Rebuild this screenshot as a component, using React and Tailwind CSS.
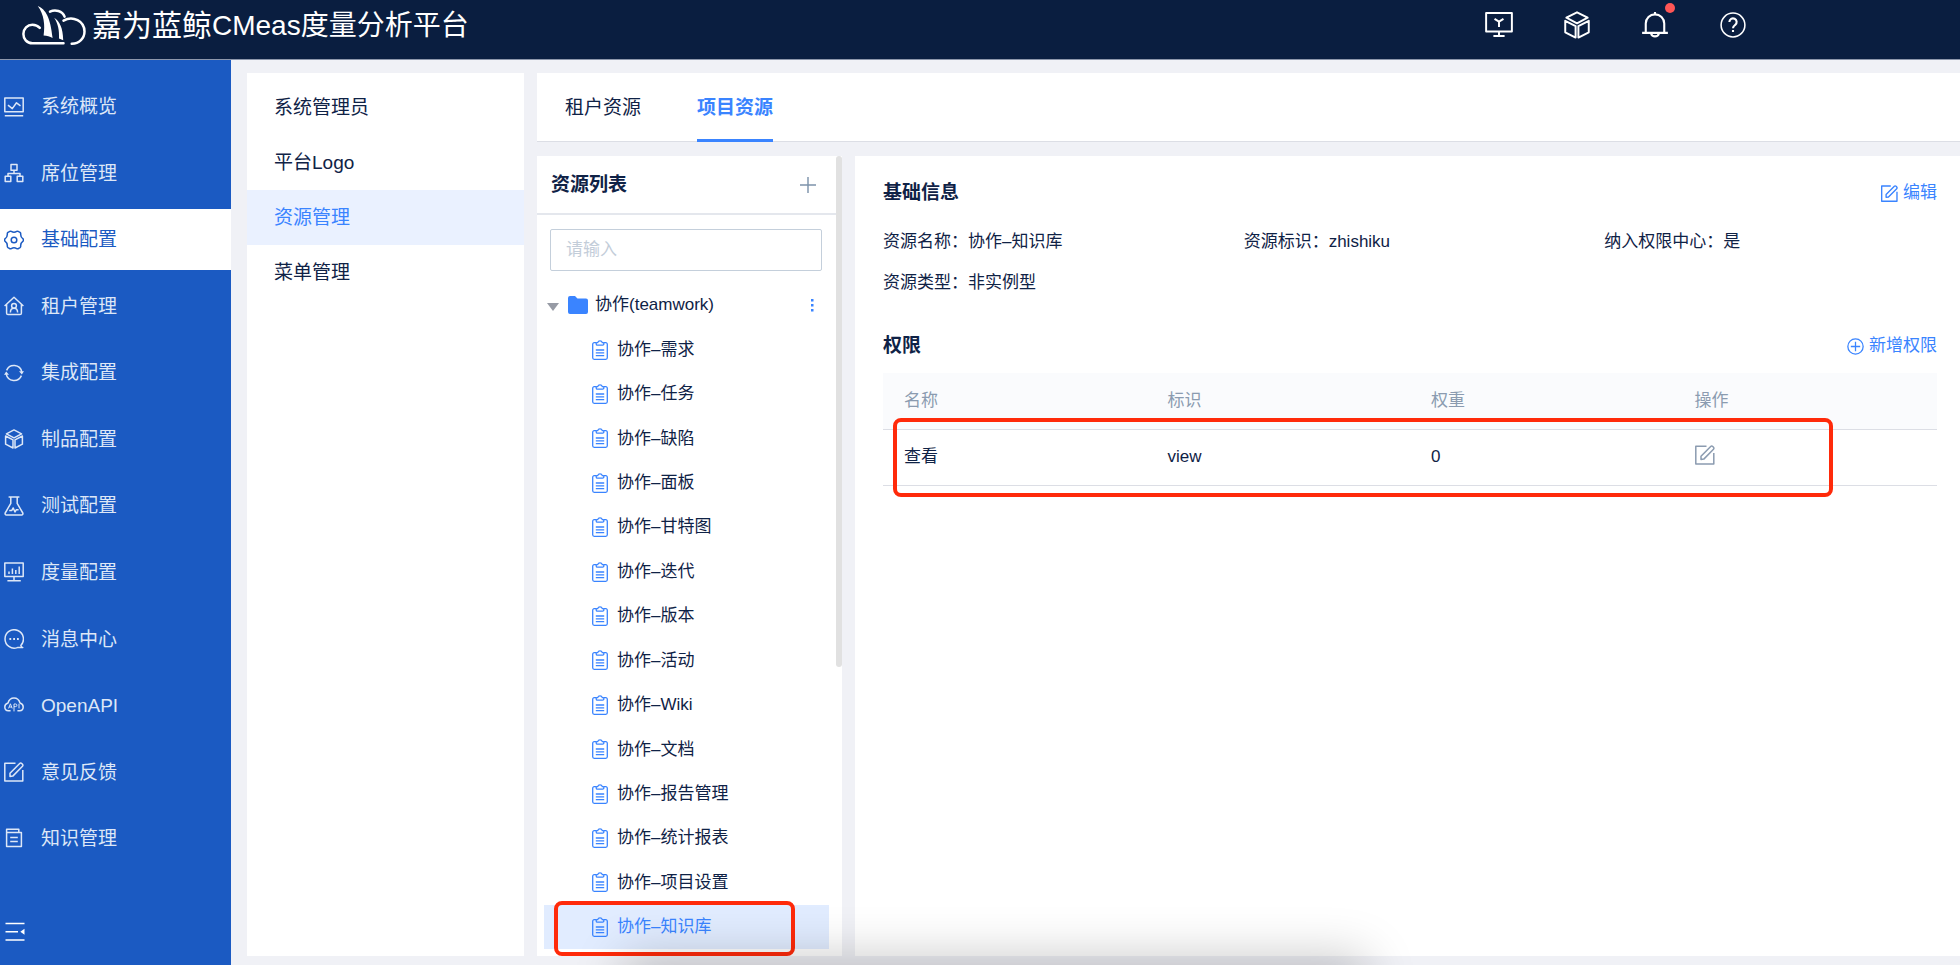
import React, { useState } from "react";

const Svg = ({ size = 20, children, className = "", width = 1.5 }) => (
  <svg
    width={size}
    height={size}
    viewBox="0 0 20 20"
    fill="none"
    stroke="currentColor"
    strokeWidth={width}
    strokeLinejoin="round"
    className={`shrink-0 ${className}`}
    aria-hidden="true"
  >
    {children}
  </svg>
);

const CubeShape = () => (
  <>
    <path d="M10 .9 17.6 4.800 10 8.800 2.400 4.800z" />
    <path d="M1.600 7 9 10.800v8.200L1.600 15.200zM18.400 7 11 10.800v8.200l7.400-3.800z" />
  </>
);

const EditShape = () => (
  <>
    <path d="M11.500 1.200H.8v17.900h18V8" />
    <path d="M6 14.400v-3.200L15.700 1.500a1.400 1.400 0 0 1 2 0l.8.8a1.400 1.400 0 0 1 0 2L8.800 14.100z" />
  </>
);

const Logo = () => (
  <svg
    width="64"
    height="40"
    viewBox="0 0 64 40"
    fill="none"
    stroke="#fff"
    strokeWidth="2.5"
    strokeLinecap="round"
    className="shrink-0"
    aria-hidden="true"
  >
    <path d="M41.500 37.300H10.500C4.500 37.300 1.400 32.600 1.400 28c0-5.400 4-9.300 9-9.300 3 0 5.600 1.200 7.400 3.200" />
    <path d="M28 5.600c5-2.400 12.500-1 14.600 5" />
    <path d="M41.500 14.600c9.500-5.400 21 .6 21 11 0 6.800-5.200 12-12.800 12.200" />
    <path
      d="M15.800 0C24 3.400 28.500 12 30.600 32c-2.800-1.500-5.500-2.300-9-2.600C23.200 19 22 8.500 15.800 0zM32.200 11.800c5.500 3.800 8.700 10 9 22.400l-4.200-1.600c.4-8-.8-14.600-4.800-20.800z"
      fill="#fff"
      stroke="none"
    />
  </svg>
);

const menus = [
  {
    label: "系统概览",
    icon: (
      <>
        <path d="M.8 1h18.400v13.800H.8zM.8 18.800h18.400" />
        <path d="m4 8.200 4.300 3.400 4.200-5.800 4 3" />
      </>
    ),
  },
  {
    label: "席位管理",
    icon: (
      <path d="M7 1.600h6v5.600H7zM1.200 13.200h5.600v5.400H1.200zM13.200 13.200h5.600v5.400h-5.600zM10 7.200v3.200M4 13.200v-2.800h12v2.800" />
    ),
  },
  {
    label: "基础配置",
    icon: (
      <>
        <path d="M5.300 1.600Q6.300.8 7.300 1.400 10 3 12.700 1.400q1-.6 2 .2l1.300.8q.8.600.7 1.600-.2 3 2.100 4.600.8.800.8 1.400t-.8 1.400q-2.300 1.600-2.100 4.600.1 1-.7 1.600l-1.300.8q-1 .8-2 .2-2.700-1.600-5.400 0-1 .6-2-.2L4 17.600q-.8-.6-.7-1.600.2-3-2.100-4.600-.8-.8-.8-1.400t.8-1.400Q3.500 7 3.300 4 3.200 3 4 2.400z" />
        <circle cx="10" cy="10" r="2.800" />
      </>
    ),
  },
  {
    label: "租户管理",
    icon: (
      <>
        <path d="M.6 10 10 1.200l9.400 8.800M2.600 8.600v8.600c0 .9.500 1.400 1.400 1.400h12c.9 0 1.400-.5 1.400-1.400V8.600" />
        <circle cx="10" cy="9.800" r="2.400" />
        <path d="M6.400 16.400c0-2.400 1.400-4.200 3.600-4.200s3.600 1.800 3.600 4.200" />
      </>
    ),
  },
  {
    label: "集成配置",
    icon: (
      <>
        <path d="M2.600 7.400a8 8 0 0 1 15.200 1.400M17.400 12.600A8 8 0 0 1 2.200 11.200" />
        <path d="M15 8.200h5L17.800 11.400zM0 11.800h5L2.200 8.600z" fill="currentColor" stroke="none" />
      </>
    ),
  },
  { label: "制品配置", icon: <CubeShape /> },
  {
    label: "测试配置",
    icon: (
      <>
        <path d="M4.600 1h10.800M6.800 1v6.400L1.200 17c-.4 1 .2 1.900 1.200 1.900h15.200c1 0 1.600-.9 1.200-1.900l-5.600-9.600V1" />
        <path d="M5.200 14.400h2.600l1.400-2.400 1.800 4 1.200-2.200h2.400" />
      </>
    ),
  },
  {
    label: "度量配置",
    icon: (
      <path d="M.8 1h18.400v13.400H.8zM10 14.400v4.200M3.400 18.800h13.400M5 12V9.400M8.400 12V6.400M11.800 12V8M15.200 12V4.400" />
    ),
  },
  {
    label: "消息中心",
    icon: (
      <>
        <path d="M16.800 16.400a9.200 9.200 0 1 0-3.400 2.200h5.400c-1.200-.4-1.800-1.200-2-2.200z" />
        <path d="M5.400 10h1.800M9.200 10H11M13 10h1.800" strokeWidth="1.8" />
      </>
    ),
  },
  {
    label: "OpenAPI",
    icon: (
      <>
        <path d="M6.600 15.800H4.400C2 15.600.8 13.900.8 12c0-2 1.200-3.500 3.200-4C5 4.600 7.200 3 10 3s5 1.600 6 5c2 .5 3.200 2 3.200 4 0 1.900-1.200 3.600-3.600 3.800h-2.200" />
        <path
          d="m4.600 13.400 1.800-4.600 1.800 4.600M5.200 12h2.400M10 16.400V9h1.600a1.200 1.200 0 0 1 0 2.600H10M15 8.800v4.600"
          strokeWidth="1"
        />
      </>
    ),
  },
  { label: "意见反馈", icon: <EditShape /> },
  {
    label: "知识管理",
    icon: (
      <path d="M2.600 4.600h14.800v14H2.600zM2.600 4.600V1.200h12.200v3.400M6.200 9.400h7.600M6.200 13.400h7.600" />
    ),
  },
];

const settings = ["系统管理员", "平台Logo", "资源管理", "菜单管理"];

const tabs = ["租户资源", "项目资源"];

const resources = [
  "需求",
  "任务",
  "缺陷",
  "面板",
  "甘特图",
  "迭代",
  "版本",
  "活动",
  "Wiki",
  "文档",
  "报告管理",
  "统计报表",
  "项目设置",
  "知识库",
];

const details = [
  ["资源名称", "协作–知识库"],
  ["资源标识", "zhishiku"],
  ["纳入权限中心", "是"],
  ["资源类型", "非实例型"],
];

const Header = () => (
  <header className="flex h-[60px] shrink-0 items-start border-b border-[#8d97ab] bg-[#0a1e40] pl-[22px] text-white">
    <div className="flex flex-1 items-center pt-1">
      <Logo />
      <h1 className="ml-1.5 flex items-center whitespace-nowrap text-[28px] leading-11">
        <span className="text-[30px]">嘉为蓝鲸</span>
        <span>CMeas度量分析平台</span>
      </h1>
    </div>
    <div className="mr-[213px] flex h-[50px] items-center gap-[50px]">
      <button aria-label="工作台">
        <Svg size={28} width={1.4}>
          <path d="M.8 1.400h18.400v13.200H.8zM10 14.600v3M6 17.800h8M6.800 5.600 10 7.600l3.200-2M10 7.600v3.800" />
        </Svg>
      </button>
      <button aria-label="产品">
        <Svg size={28} width={1.4}>
          <CubeShape />
        </Svg>
      </button>
      <button aria-label="通知" className="relative">
        <Svg size={28} width={1.5}>
          <path d="M.8 15.600h18.400M3.400 15.600V9a6.600 6.600 0 0 1 13.200 0v6.600M10 2.400V.8M7.200 16a2.900 2.900 0 0 0 5.600 0" />
        </Svg>
        <span className="absolute -right-1.5 -top-2 size-2.5 rounded-full bg-[#ff5656]" />
      </button>
      <button aria-label="帮助">
        <Svg size={28} width={1.1}>
          <circle cx="10" cy="10" r="8.500" />
          <path
            d="M7.400 7.800a2.600 2.600 0 1 1 4.200 2.100c-1 .8-1.600 1.200-1.600 2.500M10 13.600v1.400"
            strokeWidth="1.5"
          />
        </Svg>
      </button>
    </div>
  </header>
);

const Sidebar = () => (
  <aside className="flex w-[231px] shrink-0 flex-col bg-[#1b5ac2] pt-4 text-[#dde7f7]">
    <nav className="flex flex-1 flex-col justify-between">
      {menus.map(({ label, icon }) => (
        <a
          key={label}
          href="#"
          className={`flex h-[61px] items-center gap-[17px] pl-1 text-[19px] ${
            label === "基础配置" ? "bg-white text-[#1b5ac2]" : ""
          }`}
        >
          <Svg>{icon}</Svg>
          <span className="pt-0.5">{label}</span>
        </a>
      ))}
    </nav>
    <div className="flex h-24 items-center px-[5px]">
      <button aria-label="收起菜单" className="mt-[30px] text-white">
        <Svg>
          <path d="M.5 1.500h19M.5 9.800h12.500M.5 18h19" />
          <path d="M19.500 6.800v6l-4.200-3z" fill="currentColor" stroke="none" />
        </Svg>
      </button>
    </div>
  </aside>
);

const ResourceList = () => {
  const [keyword, setKeyword] = useState("");

  return (
    <section className="relative flex w-[305px] shrink-0 flex-col bg-white pb-[7px]">
      <div className="mr-1.5 flex h-[59px] items-center justify-between border-b-2 border-[#e4e7ed] pl-3.5 pr-5">
        <h2 className="pt-0.5 text-[19px] font-bold">资源列表</h2>
        <button aria-label="新增资源" className="text-[#7d93ab]">
          <Svg size={16} width={1.8}>
            <path d="M10 0v20M0 10h20" />
          </Svg>
        </button>
      </div>
      <div className="pb-3 pl-[13px] pr-5 pt-3.5">
        <input
          type="text"
          aria-label="搜索资源"
          placeholder="请输入"
          value={keyword}
          onChange={(e) => setKeyword(e.target.value)}
          className="h-[42px] w-full rounded-xs border border-[#c4cfdb] px-[15px] text-[17px] placeholder:text-[#c3cdd9]"
        />
      </div>
      <div className="ml-[7px] mr-[13px] flex flex-1 flex-col text-[17px]">
        <div className="flex flex-1 items-center pl-[3px] pr-3">
          <svg width="12" height="8" viewBox="0 0 12 8" className="mt-1" fill="#979ba5" aria-hidden="true">
            <path d="M0 0h12L6 8z" />
          </svg>
          <svg width="20" height="18" viewBox="0 0 20 18" className="ml-[9px]" fill="#3a84ff" aria-hidden="true">
            <path d="M2 0h5l2.500 2.500H18a2 2 0 0 1 2 2V16a2 2 0 0 1-2 2H2a2 2 0 0 1-2-2V2a2 2 0 0 1 2-2z" />
          </svg>
          <span className="ml-[7px] flex-1">协作(teamwork)</span>
          <button aria-label="更多操作">
            <svg width="10" height="14" viewBox="0 0 10 14" fill="#3a84ff" aria-hidden="true">
              <path d="M4 1h2.500v2.500H4zM4 6h2.500v2.500H4zM4 11h2.500v2.500H4z" />
            </svg>
          </button>
        </div>
        {resources.map((name) => (
          <a
            key={name}
            href="#"
            className={`relative flex flex-1 items-center gap-[9px] pl-12 ${
              name === "知识库" ? "bg-[#e1ecff] text-[#3a84ff]" : ""
            }`}
          >
            <svg
              width="16"
              height="20"
              viewBox="0 0 16 20"
              fill="none"
              stroke="#3a84ff"
              strokeWidth="1.3"
              aria-hidden="true"
            >
              <path d="M4 2.700H2.200A1.500 1.500 0 0 0 .7 4.200v13.600c0 .8.700 1.500 1.500 1.500h11.600c.8 0 1.500-.7 1.500-1.500V4.200c0-.8-.7-1.500-1.500-1.500H12" />
              <path d="M4.200 3.200q0-.6.700-.6h.8a2.400 2.400 0 0 1 4.600 0h.8q.7 0 .7.600v.8q0 1.200-1.200 1.200H5.400Q4.200 5.200 4.200 4zM3.800 10h8.400M3.800 12.800h8.400M3.800 15.600h8.400" />
            </svg>
            <span>协作–{name}</span>
            {name === "知识库" && (
              <span className="absolute -bottom-[7px] -top-1 left-2.5 right-[34px] rounded-lg border-4 border-[#ff2a0a]" />
            )}
          </a>
        ))}
      </div>
      <div className="absolute right-0 top-0 h-[511px] w-1.5 rounded-full bg-[#e1e1e1]" />
    </section>
  );
};

const Permissions = () => (
  <div className="relative mt-[13px]">
    <table className="w-full table-fixed text-left text-[17px]">
      <thead>
        <tr className="h-14 border-b border-[#dcdee5] bg-[#fafbfd] text-[#8b9bb0]">
          {["名称", "标识", "权重", "操作"].map((title) => (
            <th key={title} className="px-[21px] font-normal">
              {title}
            </th>
          ))}
        </tr>
      </thead>
      <tbody>
        <tr className="h-14 border-b border-[#dcdee5]">
          <td className="px-[21px]">查看</td>
          <td className="px-[21px]">view</td>
          <td className="px-[21px]">0</td>
          <td className="px-[21px]">
            <button aria-label="编辑权限" className="block pb-1 text-[#8b9bb0]">
              <Svg>
                <EditShape />
              </Svg>
            </button>
          </td>
        </tr>
      </tbody>
    </table>
    <div className="pointer-events-none absolute -bottom-[11px] left-2.5 right-[104px] top-[45px] rounded-lg border-4 border-[#ff2a0a]" />
  </div>
);

const ResourceDetail = () => (
  <section className="min-w-0 flex-1 bg-white pl-7 pr-[23px] pt-[23px]">
    <div className="flex h-7 items-center justify-between">
      <h2 className="text-[19px] font-bold">基础信息</h2>
      <button className="flex items-center gap-[5px] text-[17px] text-[#3a84ff]">
        <Svg size={17} width={1.6}>
          <EditShape />
        </Svg>
        编辑
      </button>
    </div>
    <dl className="mt-[21px] grid grid-cols-3 gap-x-7 gap-y-[13px] text-[17px] leading-7">
      {details.map(([name, value]) => (
        <div key={name} className="flex">
          <dt>{name}：</dt>
          <dd>{value}</dd>
        </div>
      ))}
    </dl>
    <div className="mt-[35px] flex h-7 items-center justify-between">
      <h2 className="text-[19px] font-bold">权限</h2>
      <button className="flex items-center gap-[5px] text-[17px] text-[#3a84ff]">
        <Svg size={17} width={1.5}>
          <circle cx="10" cy="10" r="9" />
          <path d="M10 4.500v11M4.500 10h11" />
        </Svg>
        新增权限
      </button>
    </div>
    <Permissions />
  </section>
);

const App = () => {
  const [activeTab, setActiveTab] = useState("项目资源");

  return (
    <div className="relative flex min-h-screen flex-col overflow-hidden bg-[#f0f1f6] font-['Liberation_Sans','Noto_Sans_CJK_SC',sans-serif] text-[#0f2246]">
      <Header />
      <div className="flex flex-1">
        <Sidebar />
        <nav className="mb-[9px] ml-4 mt-[13px] w-[277px] shrink-0 bg-white pt-[7px]">
          {settings.map((item) => (
            <a
              key={item}
              href="#"
              className={`flex h-[55px] items-center pl-[27px] pt-0.5 text-[19px] ${
                item === "资源管理" ? "bg-[#eaf1ff] text-[#3a84ff]" : ""
              }`}
            >
              {item}
            </a>
          ))}
        </nav>
        <main className="mb-[9px] ml-[13px] mt-[13px] flex min-w-0 flex-1 flex-col">
          <div className="flex h-[69px] shrink-0 gap-14 border-b border-[#dcdee5] bg-white pl-7">
            {tabs.map((tab) => (
              <button
                key={tab}
                onClick={() => setActiveTab(tab)}
                className={`-mb-px border-b-3 pt-[5px] text-[19px] ${
                  activeTab === tab
                    ? "border-[#3a84ff] font-bold text-[#3a84ff]"
                    : "border-transparent"
                }`}
              >
                {tab}
              </button>
            ))}
          </div>
          <div className="mt-3.5 flex flex-1 gap-[13px]">
            <ResourceList />
            <ResourceDetail />
          </div>
        </main>
      </div>
      <div className="pointer-events-none absolute -bottom-10 left-[640px] right-[610px] h-8 shadow-[0_0_50px_16px_rgba(0,0,0,0.22)]" />
    </div>
  );
};

export default App;
